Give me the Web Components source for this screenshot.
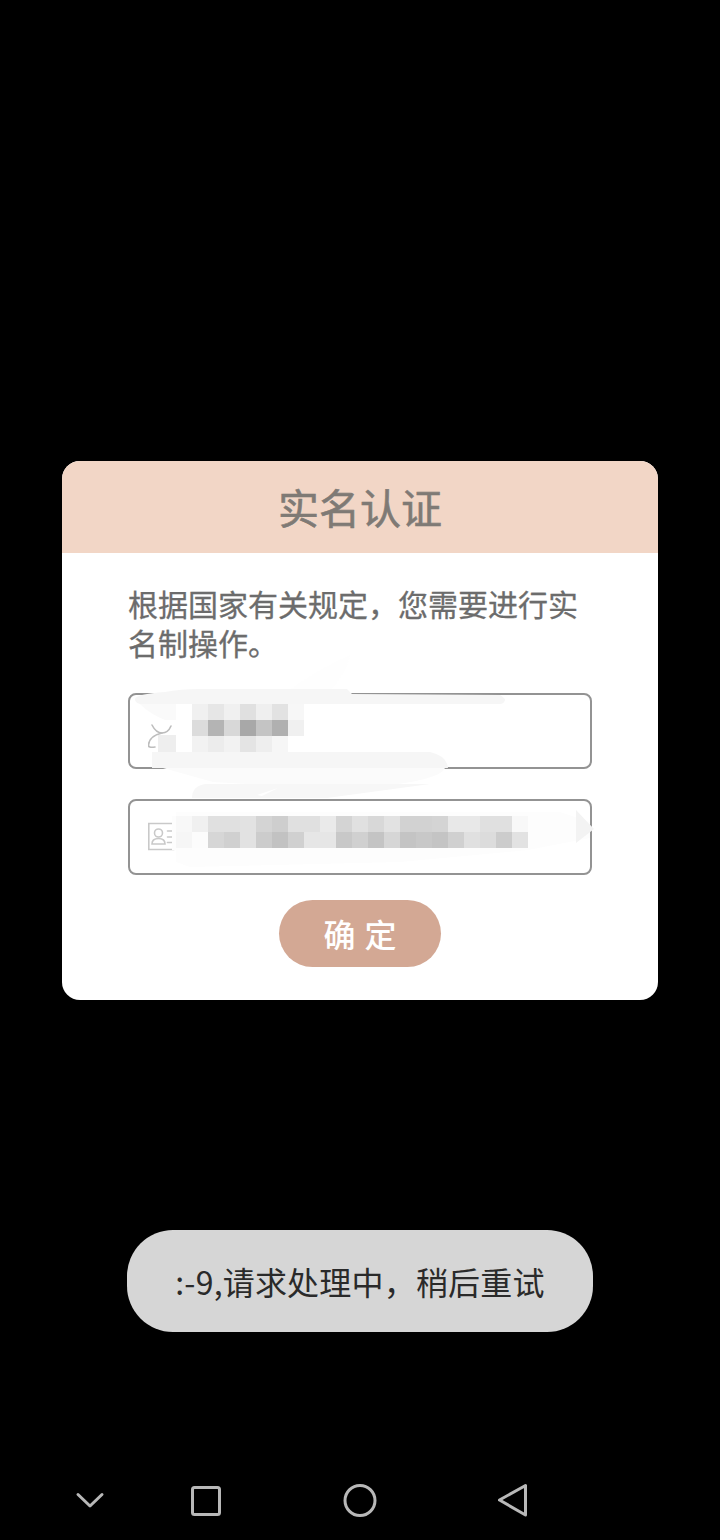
<!DOCTYPE html>
<html>
<head>
<meta charset="utf-8">
<style>
  html, body { margin: 0; height: 100%; background: #000; }
  body { width: 720px; height: 1540px; overflow: hidden; font-family: "Noto Sans CJK SC", "Noto Sans", sans-serif; }
</style>
</head>
<body>
<app-screen>
  <auth-dialog heading="实名认证">
    根据国家有关规定，您需要进行实名制操作。
    <mosaic-field slot="fields" kind="name" top="9"
      cells="ff f0 e6 f0 e0 ef e2 f7|ff dc b4 d8 a8 c4 b0 f0|ff f2 ec f2 e4 ee f6 ff"></mosaic-field>
    <mosaic-field slot="fields" kind="id" top="15"
      cells="f8 f0 e0 e0 e2 d4 ce e0 e0 ea d4 e0 d8 e2 d2 d2 d4 e8 e8 e0 e0 f8|f6 fc d6 d0 e2 cc c2 d0 e6 e6 c8 d0 c4 d6 c4 c8 c4 d0 e0 dc cc e2"></mosaic-field>
    <pill-button slot="action">确 定</pill-button>
  </auth-dialog>
  <toast-message slot="toast">:-9,请求处理中，稍后重试</toast-message>
  <nav-bar slot="nav"></nav-bar>
</app-screen>

<script>
class AppScreen extends HTMLElement {
  constructor() {
    super();
    this.attachShadow({mode: 'open'}).innerHTML = /* html */ `
      <style>
        :host { display: flex; flex-direction: column; align-items: center; width: 720px; height: 1540px; background: #000; }
        .dialog { padding-top: 461px; }
        .toast { padding-top: 230px; }
        .nav { padding-top: 138px; }
      </style>
      <div class="dialog"><slot></slot></div>
      <div class="toast"><slot name="toast"></slot></div>
      <div class="nav"><slot name="nav"></slot></div>
    `;
  }
}

class AuthDialog extends HTMLElement {
  constructor() {
    super();
    this.attachShadow({mode: 'open'}).innerHTML = /* html */ `
      <style>
        :host { display: block; position: relative; width: 596px; height: 539px; border-radius: 18px; overflow: hidden; background: #fff; }
        header { height: 92px; background: #f2d6c6; color: #7f7a75; font-size: 41px; line-height: 90px; text-align: center; -webkit-text-stroke: 0.6px #7f7a75; }
        .body { display: flex; flex-direction: column; padding: 31px 66px 0; }
        .text { color: #6c6c6c; font-size: 30px; line-height: 39px; height: 109px; -webkit-text-stroke: 0.3px #6c6c6c; }
        .fields { display: flex; flex-direction: column; gap: 30px; }
        .action { display: flex; justify-content: center; padding-top: 25px; }
        svg { position: absolute; left: 0; top: 0; pointer-events: none; }
      </style>
      <header>${this.getAttribute('heading')}</header>
      <div class="body">
        <div class="text"><slot></slot></div>
        <div class="fields"><slot name="fields"></slot></div>
        <div class="action"><slot name="action"></slot></div>
      </div>
      <svg width="596" height="539" viewBox="62 461 596 539">
        <!-- smears laid over the two fields -->
        <path fill="#fefefe" d="M290 690 Q320 668 350 655 Q345 675 330 690 Z"/>
        <path fill="#f6f6f6" d="M135 699 Q136 694 165 692 Q180 689 200 689 L347 689 L352 694 L500 695 Q506 699 505 700 Q504 704 500 704 L140 704 Q135 703 135 699 Z"/>
        <path fill="#fafafa" d="M140 704 L176 704 L176 720 L165 720 Q150 714 140 704 Z"/>
        <rect x="158" y="735" width="18" height="17" fill="#eeeeee"/>
        <path fill="#fbfbfb" d="M163 768 L445 768 Q440 780 380 786 L300 787 L213 782 Z"/>
        <path fill="#f6f6f6" d="M152 752 L430 752 Q447 756 448 768 L152 768 Z"/>
        <path fill="#f7f7f7" d="M192 798 Q192 786 205 784 L430 784 L327 798 Z"/>
        <path fill="#ffffff" d="M257 795 L278 788 L262 796 Z"/>
        <path fill="#fdfdfd" fill-rule="evenodd" d="M172 816 L176 816 L176 812 L560 812 L590 822 L590 838 L528 850 L400 862 L190 867 L176 862 L176 850 L172 850 Z M176 816 L176 848 L528 848 L528 816 Z"/>
        <path fill="#f3f3f3" d="M576 810 L594 829 L576 843 Z"/>
      </svg>
    `;
  }
}

const FIELD_ICONS = {
  name: /* html */ `
    <svg width="28" height="48" viewBox="148 704 28 48" fill="none" stroke="#bdbdbd" stroke-width="1.6" stroke-linecap="round">
      <path d="M152 725 Q156 733 162 733 Q168 733 171 726"/>
      <path d="M162 733 Q149 736 148.5 745 Q148 748 155 747"/>
    </svg>`,
  id: /* html */ `
    <svg width="28" height="48" viewBox="148 816 28 48" fill="none" stroke="#c9c9c9" stroke-width="1.6" stroke-linecap="round">
      <path d="M174 823.5 L148.8 823.5 L148.8 849.5 L174 849.5"/>
      <circle cx="158.5" cy="833" r="4"/>
      <path d="M152 844 Q152 838.5 158.5 838.5 Q165 838.5 165 844 Z"/>
      <path d="M167.5 831 H175 M167.5 837 H175 M167.5 842.5 H173"/>
    </svg>`
};

class MosaicField extends HTMLElement {
  constructor() {
    super();
    let rows = this.getAttribute('cells').split('|').map(r => r.split(' '));
    let cells = rows.map(r => r.map(c => `<i style="background:#${c}${c}${c}"></i>`).join('')).join('');
    this.attachShadow({mode: 'open'}).innerHTML = /* html */ `
      <style>
        :host { display: flex; align-items: flex-start; box-sizing: border-box; width: 464px; height: 76px; padding: ${this.getAttribute('top')}px 0 0 18px; border: 2px solid #939393; border-radius: 8px; background: #fff; }
        svg { display: block; flex: none; }
        .mosaic { display: grid; grid-template-columns: repeat(${rows[0].length}, 16px); grid-auto-rows: 16px; filter: blur(0.5px); }
      </style>
      ${FIELD_ICONS[this.getAttribute('kind')]}
      <div class="mosaic">${cells}</div>
    `;
  }
}

class PillButton extends HTMLElement {
  constructor() {
    super();
    this.attachShadow({mode: 'open'}).innerHTML = /* html */ `
      <style>
        :host { display: flex; align-items: center; justify-content: center; width: 162px; height: 67px; border-radius: 34px; background: #d3a894; color: #fff; font-size: 32px; font-weight: 500; word-spacing: 2px; }
        span { position: relative; top: -1px; }
      </style>
      <span><slot></slot></span>
    `;
  }
}

class ToastMessage extends HTMLElement {
  constructor() {
    super();
    this.attachShadow({mode: 'open'}).innerHTML = /* html */ `
      <style>
        :host { display: flex; align-items: center; justify-content: center; width: 466px; height: 102px; border-radius: 46px; background: #d6d6d6; color: #2a2a2a; font-size: 32px; letter-spacing: 0.2px; }
      </style>
      <slot></slot>
    `;
  }
}

class NavBar extends HTMLElement {
  constructor() {
    super();
    this.attachShadow({mode: 'open'}).innerHTML = /* html */ `
      <style>
        :host { display: block; width: 720px; height: 60px; }
        svg { display: block; }
      </style>
      <svg width="720" height="60" viewBox="0 1470 720 60" fill="none" stroke="#b8b8b8" stroke-width="3" stroke-linejoin="round" stroke-linecap="round">
        <path d="M78 1494.5 L90 1506 L102 1494.5"/>
        <rect x="192.5" y="1487.5" width="27" height="27" rx="2"/>
        <circle cx="360" cy="1500.5" r="15"/>
        <path d="M525.5 1485.5 L525.5 1515 L499.5 1500 Z"/>
      </svg>
    `;
  }
}

customElements.define('app-screen', AppScreen);
customElements.define('auth-dialog', AuthDialog);
customElements.define('mosaic-field', MosaicField);
customElements.define('pill-button', PillButton);
customElements.define('toast-message', ToastMessage);
customElements.define('nav-bar', NavBar);
</script>
</body>
</html>
